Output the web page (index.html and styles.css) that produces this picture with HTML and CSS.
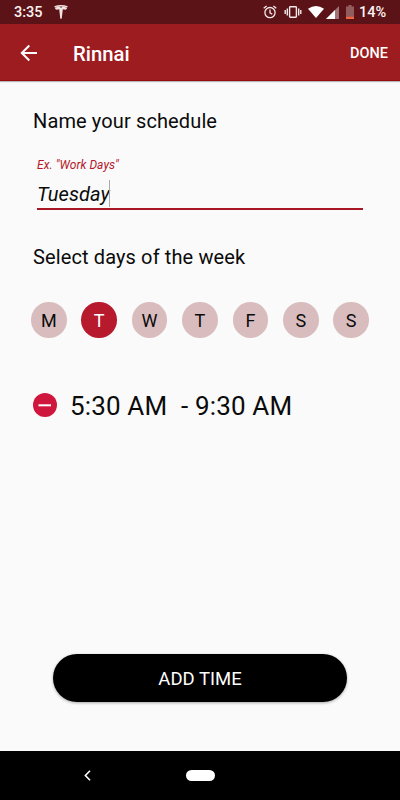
FILE: index.html
```html
<!DOCTYPE html>
<html lang="en">
<head>
<meta charset="utf-8">
<title>Rinnai</title>
<link rel="stylesheet" href="styles.css">
</head>
<body>
<div class="screen">
  <div class="status">
    <span class="clock">3:35</span>
    <svg class="tesla" width="14" height="14" viewBox="0 0 14 14" fill="#f3e4e4"><path d="M.2 1.200Q7-1 13.800 1.200L13.300 2.300Q7 .7 .7 2.300ZM.8 2.700Q4 1.700 5.800 1.900L7 2.800L8.200 1.900Q10 1.700 13.200 2.700Q12.600 4.600 11.400 4.800Q10 4.200 8.800 4.200L7.700 13.700H6.300L5.200 4.200Q4 4.200 2.600 4.800Q1.400 4.600 .8 2.700Z"/></svg>
    <svg class="alarm" width="14" height="14" viewBox="0 0 14 14" fill="none" stroke="#f5e9e9" stroke-width="1.3"><circle cx="7" cy="7.600" r="5.100"/><path d="M7 4.500V7.800L9.300 9.200M.7 3.300L3.600.9M13.300 3.300L10.400.9"/></svg>
    <svg class="vibrate" width="18" height="14" viewBox="0 0 18 14" fill="none" stroke="#f5e9e9" stroke-width="1.400"><rect x="5.600" y="1.700" width="6.800" height="10.600" rx=".7"/><path d="M3.300 3.500V10.500M14.700 3.500V10.500M1.200 5V9M16.800 5V9"/></svg>
    <svg class="wifi" width="16" height="12" viewBox="0 0 16 12" fill="#fff"><path d="M0 2.800Q8-2.800 16 2.800L8 12Z"/></svg>
    <svg class="signal" width="13" height="13" viewBox="0 0 13 13"><path d="M0 13L13 0V13Z" fill="#a17376"/><path d="M0 13L9 4V13Z" fill="#fff"/></svg>
    <svg class="battery" width="8" height="14" viewBox="0 0 8 14"><path d="M0 1.500H2.400V0H5.600V1.500H8V14H0Z" fill="#925b5d"/><path d="M0 11.800H8V14H0Z" fill="#f4643c"/></svg>
    <span class="percent">14%</span>
  </div>
  <header class="bar">
    <svg class="back" width="18" height="18" viewBox="0 0 18 18" fill="none" stroke="#fff" stroke-width="2"><path d="M17 9H2M9.300 1.500L1.800 9L9.300 16.500"/></svg>
    <h1 class="title">Rinnai</h1>
    <span class="done">DONE</span>
  </header>
  <main class="content">
    <h2 class="heading">Name your schedule</h2>
    <div class="field">
      <div class="hint">Ex. "Work Days"</div>
      <div class="value"><span>Tuesday</span><i class="caret"></i></div>
    </div>
    <h2 class="heading second">Select days of the week</h2>
    <div class="days">
      <span class="day">M</span><span class="day on">T</span><span class="day">W</span><span class="day">T</span><span class="day">F</span><span class="day">S</span><span class="day">S</span>
    </div>
    <div class="slot">
      <svg width="24" height="24" viewBox="0 0 24 24"><circle cx="12" cy="12" r="12" fill="#cf173e"/><path d="M5.500 12.300H18" stroke="#fff" stroke-width="2"/></svg>
      <span class="start">5:30 AM</span><span class="end">- 9:30 AM</span>
    </div>
    <div class="add">ADD TIME</div>
  </main>
  <nav class="nav">
    <svg class="navback" width="7" height="11" viewBox="0 0 7 11" fill="none" stroke="#fff" stroke-width="1.600"><path d="M6 .8L1.400 5.500L6 10.200"/></svg>
    <span class="pill"></span>
  </nav>
</div>
</body>
</html>
```
FILE: styles.css
```css
* { box-sizing: border-box; }
body { margin: 0; font-family: Roboto, sans-serif; color: #0b0b0b; }
h1, h2 { margin: 0; }
.screen { width: 400px; height: 800px; display: flex; flex-direction: column; background: #fafafa; overflow: hidden; }
.status { height: 24px; background: #5b1317; color: #fbf3f3; display: flex; align-items: center; padding: 0 14.5px 0 14px; font-size: 14.5px; font-weight: 500; line-height: 24px; white-space: nowrap; flex: none; }
.clock, .percent { padding-top: 2px; }
.clock { width: 40px; }
.alarm { margin-left: auto; }
.vibrate { margin-left: 7px; }
.wifi { margin-left: 6px; }
.signal { margin-left: 2px; }
.battery { margin-left: 7px; }
.percent { margin-left: 5px; width: 26.5px; }
.bar { height: 57px; flex: none; background: #9c1c20; border-bottom: 1px solid #960b10; box-shadow: 0 1px 1px #0004; color: #fff; display: flex; align-items: center; padding: 2px 12px 0 20px; }
.title { margin: 2px 0 0 35px; font-size: 20.3px; font-weight: 500; line-height: 24px; }
.done { margin: 2px 0 0 auto; font-size: 14.5px; font-weight: 500; line-height: 20px; }
.content { flex: 1; display: flex; flex-direction: column; padding: 28px 32px 0 33px; }
.heading { font-size: 20px; font-weight: 400; line-height: 24px; letter-spacing: 0.12px; white-space: nowrap; }
.field { margin: 24px 5px 0 4px; height: 53px; border-bottom: 2px solid #a91623; font-style: italic; }
.hint { font-size: 12px; line-height: 16px; letter-spacing: 0.07px; color: #b4162a; white-space: nowrap; }
.value { margin-top: 7px; display: flex; align-items: center; font-size: 20px; line-height: 26px; letter-spacing: 0.1px; }
.caret { width: 1px; height: 27px; margin-left: -1px; background: #aaa; }
.second { margin-top: 35px; }
.days { display: flex; justify-content: space-between; margin: 33px -1px 0 -2px; }
.day { width: 35.5px; height: 35.5px; border-radius: 50%; background: #d9bdbe; font-size: 18px; line-height: 37px; text-align: center; }
.on { background: #b71a2d; color: #fff; }
.slot { display: flex; align-items: center; height: 32px; margin-top: 51.5px; font-size: 26px; line-height: 32px; letter-spacing: 0.15px; white-space: nowrap; }
.start { margin-left: 13px; width: 111px; }
.start, .end { padding-top: 2px; }
.add { width: 294px; height: 48px; margin: auto 0 49px 20px; border-radius: 24px; background: #000; box-shadow: 0 1px 3px #0005; color: #fff; font-size: 18.5px; line-height: 50px; text-align: center; }
.nav { height: 49px; flex: none; background: #000; display: flex; align-items: center; padding-left: 84px; }
.pill { width: 29px; height: 11px; margin-left: 95px; border-radius: 6px; background: #fff; }
```
